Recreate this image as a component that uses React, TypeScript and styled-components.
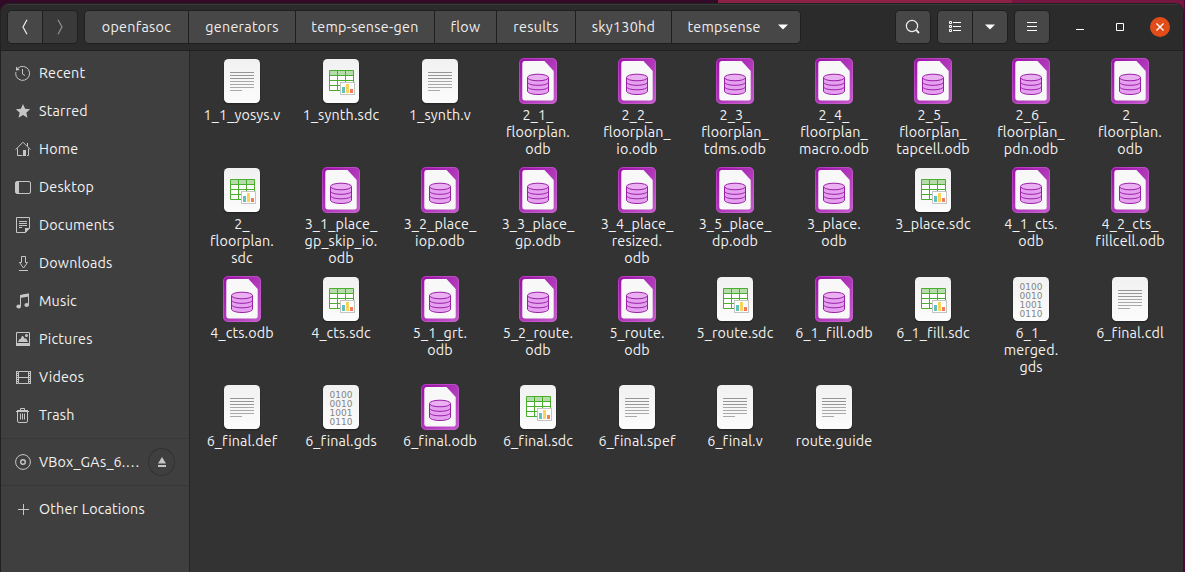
import React from 'react';
import styled, { createGlobalStyle } from 'styled-components';

const GlobalStyle = createGlobalStyle`
  * { box-sizing: border-box; }
  html, body { margin: 0; padding: 0; }
  body {
    font-family: Ubuntu, "Noto Sans", sans-serif;
    font-size: 14.3px;
    color: #f2f2f2;
    overflow: hidden;
  }
  svg { display: block; flex: none; }
`;

const Desktop = styled.div`
  height: 572px;
  padding: 3px 1px 0 0;
  display: flex;
  background: linear-gradient(90deg, #320a28 0 718px, #8b2246 718px 1012px, #74163f 1012px 1184px, #4b0b3b 1184px);
`;

const Window = styled.div`
  flex: 1;
  min-width: 0;
  display: flex;
  flex-direction: column;
  background: #333333;
  border: 1px solid #212121;
  border-bottom: 0;
  border-radius: 9px 9px 0 0;
  overflow: hidden;
`;

const HeaderBar = styled.header`
  height: 47px;
  flex: none;
  display: flex;
  align-items: center;
  padding: 0 13px 0 6px;
  background: #2b2b2b;
  border-bottom: 1px solid #202020;
  box-shadow: inset 0 1px 0 #3a3a3a;
`;

const ButtonGroup = styled.div<{ $gap?: number }>`
  display: flex;
  height: 34px;
  margin-left: ${(p) => p.$gap ?? 0}px;
  border: 1px solid #1f1f1f;
  border-radius: 5px;
  overflow: hidden;
`;

const BarButton = styled.button<{ $width: number; $muted?: boolean }>`
  width: ${(p) => p.$width}px;
  padding: 0;
  border: 0;
  display: flex;
  align-items: center;
  justify-content: center;
  font: inherit;
  letter-spacing: 0.3px;
  white-space: nowrap;
  color: ${(p) => (p.$muted ? '#929292' : '#eeeeee')};
  background: ${(p) => (p.$muted ? '#3a3a3a' : '#474747')};
  & + & { border-left: 1px solid #1f1f1f; }
`;

const CurrentFolder = styled.span`
  display: flex;
  align-items: center;
  gap: 17px;
  padding-left: 3px;
`;

const Spacer = styled.div`
  flex: 1;
`;

const WindowControls = styled.div`
  display: flex;
  align-items: center;
  gap: 20px;
  margin-left: 20px;
`;

const ControlButton = styled.button<{ $close?: boolean }>`
  width: 20px;
  height: 20px;
  padding: 0;
  border: 0;
  border-radius: 50%;
  color: #ffffff;
  background: ${(p) => (p.$close ? '#e24c18' : 'transparent')};
`;

const Body = styled.div`
  flex: 1;
  display: flex;
  min-height: 0;
`;

const Sidebar = styled.nav`
  width: 189px;
  flex: none;
  padding-top: 3px;
  background: #3f3f3f;
  border-right: 1px solid #242424;
`;

const Place = styled.div`
  height: 38px;
  display: flex;
  align-items: center;
  gap: 8px;
  padding: 0 14px;
  color: #c6c6c6;
`;

const PlaceName = styled.span`
  flex: 1;
  color: #f2f2f2;
  letter-spacing: 0.2px;
  line-height: 18px;
  white-space: nowrap;
`;

const Divider = styled.div`
  height: 1px;
  margin: 4px 0;
  background: #373737;
`;

const EjectButton = styled.button`
  width: 28px;
  height: 28px;
  margin: 0;
  padding: 0;
  display: flex;
  align-items: center;
  justify-content: center;
  color: #c6c6c6;
  background: transparent;
  border: 1px solid #323232;
  border-radius: 50%;
`;

const FileGrid = styled.main`
  flex: 1;
  display: grid;
  grid-template-columns: 99px 99px 98px 99px 98px 99px 99px 98px 99px 98px;
  grid-template-rows: 109px 109px 108px 109px;
  padding: 6px 0 0 3px;
`;

const FileItem = styled.div`
  width: 98px;
  display: flex;
  flex-direction: column;
  align-items: center;
`;

const FileName = styled.span`
  margin-top: 2px;
  text-align: center;
  line-height: 17px;
  letter-spacing: 0.15px;
  white-space: pre;
`;

/* ---------- file type icons ---------- */

const Paper = () => (
  <>
    <rect x="5.5" y="2.5" width="37" height="45" rx="4.5" fill="#000" opacity=".22" />
    <rect x="6" y="2" width="36" height="44" rx="4.5" fill="url(#paper)" />
  </>
);

const TextIcon = () => (
  <svg width="48" height="48" viewBox="0 0 48 48">
    <Paper />
    {[15, 18, 21, 24, 27, 30, 33].map((y, i) => (
      <rect key={y} x="12" y={y} width={i === 6 ? 12 : 24} height="1" fill={i < 3 ? '#969696' : '#a9a9a9'} />
    ))}
  </svg>
);

const SheetIcon = () => (
  <svg width="48" height="48" viewBox="0 0 48 48">
    <Paper />
    <rect x="12.5" y="13.5" width="24" height="20" fill="#fff" />
    <rect x="12.5" y="13.5" width="24" height="5" fill="#b5dcaa" />
    <path d="M12.5 13.5h24v20h-24zM12.5 18.5h24M12.5 23.5h24M12.5 28.5h24M20.5 13.5v20M28.5 13.5v20" fill="none" stroke="#4aad2d" />
    <rect x="23.5" y="25.5" width="14" height="12" fill="#fff" stroke="#c4c4c4" />
    <path d="M25 30h3v6h-3z" fill="#62c0bd" />
    <path d="M29 27h3v9h-3z" fill="#fbd35c" />
    <path d="M33 32h3v4h-3z" fill="#f47c5d" />
  </svg>
);

const BinaryIcon = () => (
  <svg width="48" height="48" viewBox="0 0 48 48">
    <Paper />
    <g fontFamily="DejaVu Sans, sans-serif" fontSize="9" fill="#858585">
      {['0100', '0010', '1001', '0110'].map((bits, i) => (
        <text key={bits} x="12.5" y={15 + i * 9} textLength="23">{bits}</text>
      ))}
    </g>
  </svg>
);

const DatabaseIcon = () => (
  <svg width="48" height="48" viewBox="0 0 48 48">
    <rect x="5" y="1" width="38" height="46" rx="5" fill="url(#violet)" />
    <rect x="5.5" y="1.5" width="37" height="45" rx="4.5" fill="none" stroke="#d36cd9" strokeOpacity=".45" />
    <path d="M10.500 4h20l9.200 10v27a2.500 2.500 0 0 1-2.500 2.500H10.500a2.500 2.500 0 0 1-2.200-2.500V6.500a2.500 2.500 0 0 1 2.200-2.500z" fill="#f8f8f8" />
    <path d="M13.500 20.500v13.500c0 2 4.700 3.500 10.500 3.500s10.500-1.500 10.500-3.500V20.500z" fill="#e5a1ef" />
    <g fill="none" stroke="#9b1fa8">
      <path d="M13.500 20.500v13.500c0 2 4.700 3.500 10.500 3.500s10.500-1.500 10.500-3.500V20.500" />
      <path d="M13.500 25c0 2 4.700 3.300 10.500 3.300S34.500 27 34.500 25M13.500 29.500c0 2 4.700 3.300 10.500 3.300s10.500-1.300 10.500-3.300" />
      <ellipse cx="24" cy="20.500" rx="10.500" ry="3.300" fill="#eab0f2" />
    </g>
  </svg>
);

const Gradients = () => (
  <svg width="0" height="0" style={{ position: 'absolute' }}>
    <defs>
      <linearGradient id="paper" x1="0" y1="0" x2="0" y2="1">
        <stop offset="0" stopColor="#f1f1f1" />
        <stop offset="1" stopColor="#fcfcfc" />
      </linearGradient>
      <linearGradient id="violet" x1="0" y1="0" x2="1" y2="1">
        <stop offset="0" stopColor="#9a0fa6" />
        <stop offset="1" stopColor="#c45ccb" />
      </linearGradient>
    </defs>
  </svg>
);

type Kind = 'text' | 'sheet' | 'binary' | 'database';

const kindIcon: Record<Kind, React.FC> = {
  text: TextIcon,
  sheet: SheetIcon,
  binary: BinaryIcon,
  database: DatabaseIcon,
};

const files: [Kind, string][] = [
  ['text', '1_1_yosys.v'],
  ['sheet', '1_synth.sdc'],
  ['text', '1_synth.v'],
  ['database', '2_1_\nfloorplan.\nodb'],
  ['database', '2_2_\nfloorplan_\nio.odb'],
  ['database', '2_3_\nfloorplan_\ntdms.odb'],
  ['database', '2_4_\nfloorplan_\nmacro.odb'],
  ['database', '2_5_\nfloorplan_\ntapcell.odb'],
  ['database', '2_6_\nfloorplan_\npdn.odb'],
  ['database', '2_\nfloorplan.\nodb'],
  ['sheet', '2_\nfloorplan.\nsdc'],
  ['database', '3_1_place_\ngp_skip_io.\nodb'],
  ['database', '3_2_place_\niop.odb'],
  ['database', '3_3_place_\ngp.odb'],
  ['database', '3_4_place_\nresized.\nodb'],
  ['database', '3_5_place_\ndp.odb'],
  ['database', '3_place.\nodb'],
  ['sheet', '3_place.sdc'],
  ['database', '4_1_cts.\nodb'],
  ['database', '4_2_cts_\nfillcell.odb'],
  ['database', '4_cts.odb'],
  ['sheet', '4_cts.sdc'],
  ['database', '5_1_grt.\nodb'],
  ['database', '5_2_route.\nodb'],
  ['database', '5_route.\nodb'],
  ['sheet', '5_route.sdc'],
  ['database', '6_1_fill.odb'],
  ['sheet', '6_1_fill.sdc'],
  ['binary', '6_1_\nmerged.\ngds'],
  ['text', '6_final.cdl'],
  ['text', '6_final.def'],
  ['binary', '6_final.gds'],
  ['database', '6_final.odb'],
  ['sheet', '6_final.sdc'],
  ['text', '6_final.spef'],
  ['text', '6_final.v'],
  ['text', 'route.guide'],
];

/* ---------- sidebar icons ---------- */

const SmallIcon = ({ children }: { children: React.ReactNode }) => (
  <svg width="16" height="16" viewBox="0 0 16 16" fill="none" stroke="currentColor">
    {children}
  </svg>
);

const places: [string, React.ReactNode][] = [
  ['Recent', <>
    <path d="M2.600 3.500A7 7 0 1 1 .6 8.500" />
    <path d="M.8 8.500a7 7 0 0 1 .5-3" strokeDasharray="1.500 1" />
    <path d="M1 1.500v3.800h3.800z" fill="currentColor" stroke="none" />
    <path d="M7.500 4v5l2.500 1.500" />
  </>],
  ['Starred', <path d="M8 1l2.100 4.800 5 .5-3.800 3.400 1.200 5L8 12.100l-4.500 2.600 1.200-5L.9 6.300l5-.5z" fill="currentColor" stroke="none" />],
  ['Home', <>
    <path d="M.6 8.600L8 1.200l7.400 7.400M2.500 7.500v7h5M13.500 7.500v7h-1.500M12.500 2v3" />
    <path d="M8 9h3v6H8z" fill="currentColor" stroke="none" />
  </>],
  ['Desktop', <>
    <rect x=".5" y="2.500" width="15" height="12" rx="1.500" />
    <path d="M1 3h3v11H1z" fill="currentColor" stroke="none" />
  </>],
  ['Documents', <>
    <path d="M1.500.5h13v10.500l-4 4.500h-9z" />
    <path d="M4 4.500h8M4 6.500h8M4 8.500h8M4 10.500h3" />
    <path d="M10 11h5l-5 5z" fill="currentColor" stroke="none" />
  </>],
  ['Downloads', <path d="M6.500 1.500h4v6h2L8.500 13l-4-5.500h2zM4 15.500h9" />],
  ['Music', <>
    <path d="M5.500 13V2.500L13.500 1v11" />
    <path d="M5 2.200L14 .5v3L5 5z" fill="currentColor" stroke="none" />
    <ellipse cx="3.700" cy="13.500" rx="2.300" ry="2" fill="currentColor" stroke="none" />
    <ellipse cx="11.700" cy="12" rx="2.300" ry="2" fill="currentColor" stroke="none" />
  </>],
  ['Pictures', <>
    <path d="M1.500 1.500h13v12h-13z" />
    <path d="M1 12h14v3H1zM3 11l1.500-3h1L7 5h1l2 3 1-1 2 4z" fill="currentColor" stroke="none" />
    <circle cx="11.500" cy="4.500" r="1.500" fill="currentColor" stroke="none" />
  </>],
  ['Videos', <>
    <path d="M3.500 2.500h10v12h-10zM3.500 8.500h10" />
    <path d="M2 2v13M15 2v13" strokeWidth="2" strokeDasharray="1 1" />
    <path d="M1.500 2v13M15.500 2v13" />
  </>],
  ['Trash', <>
    <path d="M1 4.500h13M5.500 4V1.500h4V4M2.500 5v9a1.500 1.500 0 0 0 1.500 1.500h7a1.500 1.500 0 0 0 1.500-1.500V5M5.500 6.500v6M7.500 6.500v6M9.500 6.500v6" />
    <path d="M2 3h11v2H2z" fill="currentColor" stroke="none" />
  </>],
];

const folders: [string, number][] = [
  ['openfasoc', 103],
  ['generators', 107],
  ['temp-sense-gen', 139],
  ['flow', 62],
  ['results', 79],
  ['sky130hd', 96],
];

const DownArrow = () => (
  <svg width="10" height="6" viewBox="0 0 10 6"><path d="M0 .5h10L5 5.500z" fill="#fff" /></svg>
);

export default function App() {
  return (
    <Desktop>
      <GlobalStyle />
      <Gradients />
      <Window>
        <HeaderBar>
          <ButtonGroup>
            <BarButton $width={34} aria-label="Back">
              <svg width="8" height="16" viewBox="0 0 8 16" fill="none" stroke="currentColor" strokeWidth="1.200"><path d="M6 .8L2 8l4 7.200" /></svg>
            </BarButton>
            <BarButton $width={35} $muted aria-label="Forward">
              <svg width="8" height="16" viewBox="0 0 8 16" fill="none" stroke="currentColor" strokeWidth="1.200"><path d="M2 .8L6 8l-4 7.200" /></svg>
            </BarButton>
          </ButtonGroup>
          <ButtonGroup $gap={6}>
            {folders.map(([name, width]) => (
              <BarButton key={name} $width={width}>{name}</BarButton>
            ))}
            <BarButton $width={129}>
              <CurrentFolder>tempsense<DownArrow /></CurrentFolder>
            </BarButton>
          </ButtonGroup>
          <Spacer />
          <ButtonGroup>
            <BarButton $width={34} aria-label="Search">
              <svg width="16" height="16" viewBox="0 0 16 16" fill="none" stroke="currentColor">
                <circle cx="7" cy="7" r="5.600" strokeWidth="1.200" />
                <path d="M11.200 11.200L14 14" strokeWidth="1.800" />
              </svg>
            </BarButton>
          </ButtonGroup>
          <ButtonGroup $gap={6}>
            <BarButton $width={34} aria-label="List view">
              <svg width="14" height="12" viewBox="0 0 14 12" fill="none" stroke="#fff">
                <path d="M1.500.5h2v2h-2zM1.500 4.500h2v2h-2zM1.500 8.500h2v2h-2zM5 1.500h8M5 5.500h8M5 9.500h8" />
              </svg>
            </BarButton>
            <BarButton $width={35} aria-label="View options"><DownArrow /></BarButton>
          </ButtonGroup>
          <ButtonGroup $gap={6}>
            <BarButton $width={34} aria-label="Menu">
              <svg width="10" height="10" viewBox="0 0 10 10" stroke="#fff"><path d="M0 .5h10M0 4.500h10M0 8.500h10" /></svg>
            </BarButton>
          </ButtonGroup>
          <WindowControls>
            <ControlButton aria-label="Minimize">
              <svg width="20" height="20" viewBox="0 0 20 20"><path d="M6 12.500h8" stroke="currentColor" /></svg>
            </ControlButton>
            <ControlButton aria-label="Maximize">
              <svg width="20" height="20" viewBox="0 0 20 20"><path d="M6.500 6.500h7v7h-7z" fill="none" stroke="currentColor" /></svg>
            </ControlButton>
            <ControlButton $close aria-label="Close">
              <svg width="20" height="20" viewBox="0 0 20 20"><path d="M6.500 6.500l7 7M13.500 6.500l-7 7" stroke="currentColor" strokeWidth="1.400" /></svg>
            </ControlButton>
          </WindowControls>
        </HeaderBar>
        <Body>
          <Sidebar>
            {places.map(([name, icon]) => (
              <Place key={name}>
                <SmallIcon>{icon}</SmallIcon>
                <PlaceName>{name}</PlaceName>
              </Place>
            ))}
            <Divider />
            <Place>
              <SmallIcon>
                <circle cx="8" cy="8" r="7.400" />
                <circle cx="8" cy="8" r="2.300" strokeWidth="1.400" />
              </SmallIcon>
              <PlaceName>VBox_GAs_6.…</PlaceName>
              <EjectButton aria-label="Eject">
                <svg width="8" height="10" viewBox="0 0 8 10" fill="currentColor"><path d="M4 0l4 6.500H0zM0 8h8v2H0z" /></svg>
              </EjectButton>
            </Place>
            <Divider />
            <Place>
              <SmallIcon><path d="M8.500 3v11M3 8.500h11" /></SmallIcon>
              <PlaceName>Other Locations</PlaceName>
            </Place>
          </Sidebar>
          <FileGrid>
            {files.map(([kind, name]) => {
              const Icon = kindIcon[kind];
              return (
                <FileItem key={name}>
                  <Icon />
                  <FileName>{name}</FileName>
                </FileItem>
              );
            })}
          </FileGrid>
        </Body>
      </Window>
    </Desktop>
  );
}
